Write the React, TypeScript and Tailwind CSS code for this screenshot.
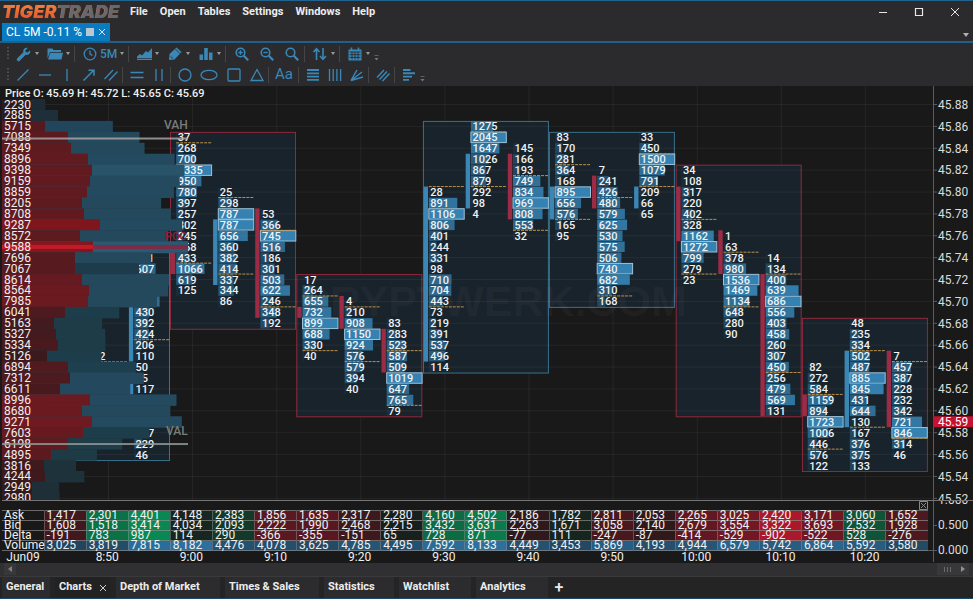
import type { ReactNode } from "react";

type Side = "up" | "down";

interface Cluster {
  slot: number;
  start: number;
  values: number[];
  body: [number, number];
  side: Side;
  dashes: number[];
  max?: number;
}

// Row 0 is price 45.88, every row below is one tick (0.01) lower.
const ROW = 10.94;
const rowY = (row: number) => 18.5 + row * ROW;
const rowTop = (row: number) => rowY(row) - ROW / 2;
const slotX = (slot: number) => 176.2 + slot * 42.1;

const CLUSTERS: Cluster[] = [
  { slot: -1, start: 14, values: [431, 607, 390, 410, 720, 430, 392, 424, 206, 110, 50, 65, 117], body: [19, 23], side: "up", dashes: [21], max: 1000 },
  { slot: -1, start: 30, values: [397, 229, 46], body: [26, 26], side: "up", dashes: [], max: 1000 },
  { slot: 0, start: 3, values: [37, 268, 700, 1335, 950, 780, 397, 257, 302, 245, 468, 433, 1066, 619, 125], body: [14, 15], side: "down", dashes: [3, 14] },
  { slot: 1, start: 8, values: [25, 298, 787, 787, 656, 360, 382, 414, 337, 344, 86], body: [11, 16], side: "up", dashes: [8, 15] },
  { slot: 2, start: 10, values: [53, 366, 745, 516, 186, 301, 503, 622, 246, 348, 192], body: [10, 19], side: "down", dashes: [11, 18] },
  { slot: 3, start: 16, values: [17, 264, 655, 732, 899, 688, 330, 40], body: [19, 19], side: "down", dashes: [17, 22] },
  { slot: 4, start: 18, values: [4, 210, 908, 1150, 924, 576, 579, 394, 40], body: [18, 20], side: "down", dashes: [18, 23] },
  { slot: 5, start: 20, values: [83, 283, 523, 587, 509, 1019, 647, 765, 79], body: [21, 24], side: "down", dashes: [22, 27] },
  { slot: 6, start: 8, values: [28, 891, 1106, 806, 401, 244, 331, 98, 710, 704, 443, 73, 219, 391, 537, 496, 114], body: [8, 23], side: "up", dashes: [7, 18] },
  { slot: 7, start: 2, values: [1275, 2045, 1647, 1026, 867, 879, 292, 98, 4], body: [5, 9], side: "up", dashes: [2, 7] },
  { slot: 8, start: 4, values: [145, 166, 193, 749, 834, 969, 808, 553, 32], body: [5, 10], side: "down", dashes: [6, 11] },
  { slot: 9, start: 3, values: [83, 170, 281, 364, 168, 895, 656, 576, 165, 95], body: [8, 10], side: "up", dashes: [5, 10] },
  { slot: 10, start: 6, values: [7, 241, 426, 480, 579, 625, 530, 575, 506, 740, 682, 310, 168], body: [7, 9], side: "down", dashes: [8, 17] },
  { slot: 11, start: 3, values: [33, 450, 1500, 1079, 791, 209, 66, 65], body: [8, 9], side: "up", dashes: [4, 7] },
  { slot: 12, start: 6, values: [34, 108, 317, 220, 402, 328, 1162, 1272, 799, 279, 23], body: [8, 12], side: "down", dashes: [10, 15] },
  { slot: 13, start: 12, values: [1, 63, 378, 980, 1536, 1469, 1134, 648, 280, 90], body: [12, 15], side: "down", dashes: [13, 18] },
  { slot: 14, start: 14, values: [14, 134, 400, 639, 686, 556, 403, 458, 260, 307, 450, 256, 479, 569, 131], body: [16, 28], side: "down", dashes: [15, 24] },
  { slot: 15, start: 24, values: [82, 272, 584, 1159, 894, 1723, 1006, 446, 576, 122], body: [27, 28], side: "down", dashes: [26, 31] },
  { slot: 16, start: 20, values: [48, 235, 334, 502, 487, 885, 845, 431, 644, 130, 167, 376, 375, 133], body: [23, 29], side: "up", dashes: [22, 29] },
  { slot: 17, start: 23, values: [7, 457, 387, 228, 232, 342, 721, 846, 314, 46], body: [23, 29], side: "down", dashes: [23, 30] },
];

const SESSIONS: { x: number; top: number; bottom: number; side: Side }[] = [
  { x: 44.5, top: 14, bottom: 32, side: "up" },
  { x: 170.5, top: 3, bottom: 20, side: "down" },
  { x: 296.8, top: 16, bottom: 28, side: "down" },
  { x: 423.4, top: 2, bottom: 24, side: "up" },
  { x: 549.4, top: 3, bottom: 18, side: "up" },
  { x: 676.2, top: 6, bottom: 28, side: "down" },
  { x: 802.4, top: 20, bottom: 33, side: "down" },
];

// [total volume, right edge of the sell part, sell colour, buy colour]
const PROFILE: [number, number, string, string][] = [
  [2230, 31, "#2a1b1e", "#1d2b34"],
  [2885, 31, "#33191d", "#1d2f39"],
  [5715, 45, "#551a1f", "#21455a"],
  [7088, 68, "#5b1a1f", "#24485c"],
  [7349, 71, "#5d1a1f", "#24485c"],
  [8896, 88, "#611a20", "#244a60"],
  [9398, 92, "#611a20", "#285369"],
  [9159, 90, "#611a20", "#244a60"],
  [8859, 87, "#611a20", "#244a60"],
  [8205, 82, "#5d1a1f", "#24485c"],
  [8708, 84, "#611a20", "#24485c"],
  [9287, 100, "#7e161d", "#244a60"],
  [8572, 80, "#5d1a1f", "#24485c"],
  [9588, 93, "#85161d", "#2b5873"],
  [7696, 75, "#561a1f", "#24485c"],
  [7067, 75, "#561a1f", "#1e3b4b"],
  [8614, 82, "#641a20", "#24485c"],
  [8564, 89, "#6b1a20", "#24485c"],
  [7985, 88, "#6b1a20", "#24485c"],
  [6041, 65, "#4d1a1f", "#1e3d4a"],
  [5163, 54, "#431a1e", "#1e3b48"],
  [5327, 56, "#431a1e", "#1e3b48"],
  [5334, 58, "#481a1e", "#1e3b48"],
  [5126, 47, "#3b1a1d", "#1e3d4a"],
  [6894, 68, "#501a1f", "#1e3f4e"],
  [7312, 70, "#4d1a1f", "#24495e"],
  [6611, 60, "#481a1e", "#24495e"],
  [8996, 90, "#6b1a20", "#244a60"],
  [8680, 82, "#6b1a20", "#24485c"],
  [9271, 92, "#6e1a20", "#244a60"],
  [7603, 83, "#661a20", "#1e3d4a"],
  [6198, 68, "#5f1a20", "#1e3d48"],
  [4895, 51, "#5a1a1f", "#1e3a45"],
  [3816, 44, "#3f1a1d", "#1e323b"],
  [4244, 45, "#3f1a1d", "#1e323b"],
  [2949, 32, "#331a1d", "#1e2f37"],
  [2980, 32, "#331a1d", "#1e2f37"],
];

const STATS = {
  Ask: [1417, 2301, 4401, 4148, 2383, 1856, 1635, 2317, 2280, 4160, 4502, 2186, 1782, 2811, 2053, 2265, 3025, 2420, 3171, 3060, 1652],
  Bid: [1608, 1518, 3414, 4034, 2093, 2222, 1990, 2468, 2215, 3432, 3631, 2263, 1671, 3058, 2140, 2679, 3554, 3322, 3693, 2532, 1928],
  Delta: [-191, 783, 987, 114, 290, -366, -355, -151, 65, 728, 871, -77, 111, -247, -87, -414, -529, -902, -522, 528, -276],
  Volume: [3025, 3819, 7815, 8182, 4476, 4078, 3625, 4785, 4495, 7592, 8133, 4449, 3453, 5869, 4193, 4944, 6579, 5742, 6864, 5592, 3580],
};

const TIMES = ["8:50", "9:00", "9:10", "9:20", "9:30", "9:40", "9:50", "10:00", "10:10", "10:20"];

const SIDE_COLOR = { up: "#3a87b5", down: "#9c2b45" };

function deltaColor(delta: number) {
  const alpha = Math.min(1, Math.abs(delta) / 1000 + (delta < 0 ? 0.08 : 0));
  return delta < 0 ? `rgba(172, 24, 44, ${alpha})` : `rgba(8, 138, 84, ${alpha})`;
}

function ClusterColumn({ slot, start, values, body, side, dashes, max }: Cluster) {
  const x = slotX(slot);
  const peak = max ?? Math.max(...values);
  return (
    <g>
      <rect x={x - 5.2} y={rowTop(body[0])} width={4.4} height={(body[1] - body[0] + 1) * ROW} fill={SIDE_COLOR[side]} />
      {values.map((v, i) => {
        const ratio = v / peak;
        return (
          <g key={i}>
            <rect
              x={x}
              y={rowTop(start + i) + 0.3}
              width={35.4 * ratio}
              height={ROW - 0.5}
              fill="#3787b8"
              fillOpacity={ratio < 0.15 ? 0.1 : 0.2 + ratio * 0.75}
              stroke={ratio === 1 ? "#9cc3d8" : "none"}
            />
            <text x={x + 1.5} y={rowY(start + i) + 4} className="fill-[#eef2f4] text-[11px] font-medium">
              {v}
            </text>
          </g>
        );
      })}
      {dashes.map((row) => (
        <line key={row} x1={x} x2={x + 36} y1={rowTop(row + 1)} y2={rowTop(row + 1)} stroke="#b8914a" strokeDasharray="3 1" />
      ))}
    </g>
  );
}

function FootprintChart() {
  const priceRows = Array.from({ length: 19 }, (_, i) => i * 2);
  return (
    <svg viewBox="0 0 973 415" className="block h-auto w-full bg-[#191919]" role="img" aria-label="CL 5M footprint chart">
      <defs>
        <clipPath id="plot">
          <rect x="2" y="0" width="971" height="414" />
        </clipPath>
      </defs>
      <g clipPath="url(#plot)">
        {TIMES.map((t, i) => (
          <line key={t} x1={108.5 + i * 84.1} x2={108.5 + i * 84.1} y1="0" y2="414" stroke="#262626" />
        ))}
        {SESSIONS.map((s) => (
          <rect
            key={s.x}
            x={s.x}
            y={rowTop(s.top) + 0.5}
            width={125}
            height={(s.bottom - s.top + 1) * ROW}
            fill="#19232c"
            stroke={s.side === "up" ? "#39718c" : "#8f293c"}
          />
        ))}
        {priceRows.map((row) => (
          <line key={row} x1="2" x2="933" y1={rowY(row)} y2={rowY(row)} stroke="#ffffff" strokeOpacity="0.055" />
        ))}
        <text x="299" y="230" className="fill-white/4 text-[43px] font-bold [font-family:'Liberation_Sans',sans-serif]">
          CRYPTWERK.COM
        </text>
        {CLUSTERS.map((c) => (
          <ClusterColumn key={`${c.slot}-${c.start}`} {...c} />
        ))}
        <text x={slotX(-2) + 1} y={rowY(23) + 4} className="fill-[#eef2f4] text-[11px] font-medium">
          72
        </text>
        <line x1="92" x2="127" y1={rowTop(24)} y2={rowTop(24)} stroke="#b8914a" strokeDasharray="3 1" />

        {PROFILE.map(([total, sell, sellColor, buyColor], i) => (
          <g key={i}>
            <rect x="2" y={rowTop(i)} width={total * 0.0194} height={ROW + 0.5} fill={buyColor} />
            <rect x="2" y={rowTop(i)} width={sell - 2} height={ROW + 0.5} fill={sellColor} />
          </g>
        ))}
        <rect x="2" y={rowY(13) - 1.8} width="186" height="4" fill="#7f2b45" />
        <rect x="2" y={rowY(13) - 1.8} width="91" height="4" fill="#c31b25" />
        <text x="165" y="154" className="fill-[#8c2037] text-[11px] font-medium">POC</text>
        {PROFILE.map(([total], i) => (
          <text key={i} x="4" y={rowY(i) + 4} className="fill-[#f0f0f0] text-[12px]">
            {total}
          </text>
        ))}
        <rect x="2" y={rowY(3) + 0.2} width="186" height="2" fill="#b0aaaa" fillOpacity="0.8" />
        <rect x="2" y={rowY(31) - 0.6} width="186" height="2" fill="#909896" fillOpacity="0.85" />
        <text x="164" y="43" className="fill-[#7b7b7b] text-[12px] font-medium">VAH</text>
        <text x="166" y="349" className="fill-[#76807e] text-[12px] font-medium">VAL</text>

        <line x1="933.5" x2="933.5" y1="0" y2="414" stroke="#5c5c5c" />
        {priceRows.map((row) => (
          <g key={row}>
            <line x1="933" x2="937" y1={rowY(row)} y2={rowY(row)} stroke="#5c5c5c" />
            <text x="938" y={rowY(row) + 4.3} className="fill-[#dcdcdc] text-[12px]">
              {(45.88 - row / 100).toFixed(2)}
            </text>
          </g>
        ))}
        <rect x="933" y={rowTop(29)} width="40" height={ROW} fill="#c41230" />
        <text x="938" y={rowY(29) + 4.3} className="fill-white text-[12px]">45.59</text>
      </g>
      <text x="5" y="11" className="fill-[#f0f0f0] text-[11px] font-medium">
        Price O: 45.69 H: 45.72 L: 45.65 C: 45.69
      </text>
      <line x1="2" x2="973" y1="414.5" y2="414.5" stroke="#757575" />
    </svg>
  );
}

function StatsTable() {
  return (
    <table className="w-full table-fixed border-collapse text-xs leading-[9px] text-[#f0f0f0]">
      <tbody>
        {(Object.keys(STATS) as (keyof typeof STATS)[]).map((name) => (
          <tr key={name} className="border-y border-[#8b8b8b]/70">
            <th scope="row" className="h-[10px] overflow-visible p-0 pl-0.5 text-left font-normal">
              {name}
            </th>
            {STATS[name].map((v, i) => (
              <td
                key={i}
                className="border-l border-[#8b8b8b]/50 p-0 pl-0.5"
                style={{
                  backgroundColor: name === "Volume" ? `rgba(47, 124, 178, ${0.2 + v / 12000})` : deltaColor(STATS.Delta[i]),
                }}
              >
                {name === "Delta" ? v : v.toLocaleString("en-US")}
              </td>
            ))}
          </tr>
        ))}
      </tbody>
      <tfoot>
        <tr>
          <th scope="row" className="p-0 pt-px text-center font-normal leading-[11px]">Jun09</th>
          {STATS.Ask.map((_, i) => (
            <td key={i} className="p-0 pt-px text-center leading-[11px]">
              {i % 2 === 1 ? TIMES[(i - 1) / 2] : ""}
            </td>
          ))}
        </tr>
      </tfoot>
    </table>
  );
}

function Icon({ children, wide }: { children: ReactNode; wide?: boolean }) {
  return (
    <svg
      viewBox={wide ? "0 0 20 16" : "0 0 16 16"}
      className={wide ? "h-4 w-5" : "h-4 w-4"}
      fill="none"
      stroke="currentColor"
      strokeWidth="1.3"
      aria-hidden="true"
    >
      {children}
    </svg>
  );
}

const Separator = () => <span className="h-4 w-1 border-l border-[#454547]" />;

const Grip = () => (
  <svg viewBox="0 0 4 14" className="mr-0.5 h-3.5 w-1" aria-hidden="true">
    <path d="M2 0v14" stroke="#5e5e60" strokeWidth="1.5" strokeDasharray="1.5 2" />
  </svg>
);

const Caret = () => (
  <svg viewBox="0 0 4 3" className="ml-[3px] h-[3px] w-1" aria-hidden="true">
    <path d="M0 0h4L2 3z" fill="#9a9a9a" />
  </svg>
);

const Overflow = () => (
  <svg viewBox="0 0 5 6" className="mt-2 h-1.5 w-[5px]" aria-hidden="true">
    <path d="M.5 .5h4" stroke="#5f5f62" />
    <path d="M.5 3h4L2.5 5.5z" fill="#77777a" />
  </svg>
);

function DropButton({ label, children, text }: { label: string; children: ReactNode; text?: string }) {
  return (
    <button aria-label={label} className={`flex h-5 items-center pl-1 ${text ? "w-[50px]" : "w-[31px]"}`}>
      <Icon>{children}</Icon>
      {text && <span className="ml-0.5 text-xs font-medium">{text}</span>}
      <Caret />
    </button>
  );
}

function ToolButton({ label, className = "w-[22px]", wide, children }: { label: string; className?: string; wide?: boolean; children: ReactNode }) {
  return (
    <button aria-label={label} className={`flex h-5 items-center justify-center ${className}`}>
      <Icon wide={wide}>{children}</Icon>
    </button>
  );
}

function Toolbar() {
  return (
    <div className="flex flex-col px-1.5 pb-px text-[#3a88b8]">
      <div className="flex h-[21px] items-center">
        <Grip />
        <DropButton label="Settings">
          <path d="M2.5 13.5 8 8" strokeWidth="3.4" strokeLinecap="round" />
          <path d="M14 4.2 11.5 6.4 9.6 6 9.5 4.2 11.8 2C9.5 1.3 7 3 7.2 5.8c.2 2.4 2.3 3.5 4.300 3C13.8 8.2 14.7 6.2 14 4.2Z" fill="currentColor" stroke="none" />
        </DropButton>
        <DropButton label="Open chart">
          <path d="M.5 2.500h5l1 1.500h7.500v2H3L.5 12.500z" fill="currentColor" stroke="none" />
          <path d="M3.300 6.700H16L14.500 13.500H1z" fill="currentColor" stroke="none" />
        </DropButton>
        <Separator />
        <DropButton label="Timeframe" text="5M">
          <circle cx="8" cy="8" r="5.8" />
          <path d="M8 4.5V8.2l2.5 1.3" />
        </DropButton>
        <Separator />
        <DropButton label="Chart type">
          <path d="M1 10.500 4 8l2 1.500L10 5l2 1.500L16 2v12H1z" fill="currentColor" stroke="none" />
          <path d="M0 12.500h16" stroke="#2b2b2d" strokeWidth="0.7" />
        </DropButton>
        <DropButton label="Drawing">
          <path d="M2.500 8 9.500 1.500l5 4.500-7 7.500L2 14z" fill="currentColor" stroke="none" />
          <path d="M8.300 3 12.800 7.500M3.500 10.500 6 12.500" stroke="#2b2b2d" strokeWidth="0.8" />
        </DropButton>
        <DropButton label="Indicators">
          <path d="M1.500 8.500h3.500V14H1.500zM6.200 2h3.600v12H6.200zM11 6.500h3.500V14H11z" fill="currentColor" stroke="none" />
        </DropButton>
        <Separator />
        <ToolButton label="Zoom in" className="w-[25px]">
          <circle cx="6.5" cy="6.5" r="4.3" strokeWidth="1.6" />
          <path d="m9.8 9.8 4.4 4.400" strokeWidth="2.2" />
          <path d="M4.3 6.5h4.400M6.5 4.300v4.400" />
        </ToolButton>
        <ToolButton label="Zoom out" className="w-[25px]">
          <circle cx="6.5" cy="6.5" r="4.3" strokeWidth="1.6" />
          <path d="m9.8 9.8 4.4 4.400" strokeWidth="2.2" />
          <path d="M4.3 6.5h4.400" />
        </ToolButton>
        <ToolButton label="Reset zoom" className="w-[25px]">
          <circle cx="6.5" cy="6.5" r="4.3" strokeWidth="1.6" />
          <path d="m9.8 9.8 4.4 4.400" strokeWidth="2.2" />
        </ToolButton>
        <Separator />
        <DropButton label="Scale">
          <path d="M4.500 14V3M1.500 6l3-3.300L7.500 6M11 2v11M8 10l3 3.300L14 10" strokeWidth="1.6" />
        </DropButton>
        <Separator />
        <DropButton label="Calendar">
          <path d="M1.500 3.500h13v11h-13z" fill="currentColor" stroke="none" />
          <path d="M4.500 1.500v3M11.500 1.500v3" strokeWidth="1.6" />
          <path d="M2.500 6h11M2.500 8.700h11M2.500 11.400h11M5 6v7.500M8 6v7.500M11 6v7.500" stroke="#2b2b2d" strokeWidth="0.9" />
        </DropButton>
        <Overflow />
      </div>
      <div className="flex h-[21px] items-center">
        <Grip />
        <ToolButton label="Trend line"><path d="M2.500 13.500l11-11" /></ToolButton>
        <ToolButton label="Horizontal line"><path d="M2 8h12" /></ToolButton>
        <ToolButton label="Vertical line"><path d="M8 2v12" /></ToolButton>
        <ToolButton label="Arrow">
          <path d="M2.500 13.500 12.500 3.500M7.500 3.200h5.500v5.500" strokeWidth="1.5" />
        </ToolButton>
        <ToolButton label="Channel"><path d="M1.500 12 10 3M6 13.500 14.500 4.500" /></ToolButton>
        <Separator />
        <ToolButton label="Horizontal range"><path d="M1.500 5.500h13M1.500 10.500h13" /></ToolButton>
        <ToolButton label="Vertical range"><path d="M5 2v12M11 2v12" /></ToolButton>
        <Separator />
        <ToolButton label="Circle"><circle cx="8" cy="8" r="6" /></ToolButton>
        <ToolButton label="Ellipse" className="w-[26px]" wide><ellipse cx="10" cy="8" rx="8" ry="4.7" /></ToolButton>
        <ToolButton label="Rectangle" className="w-6"><rect x="2" y="2" width="12" height="12" rx="1" /></ToolButton>
        <ToolButton label="Triangle"><path d="M8 2.500 14 13.500H2z" /></ToolButton>
        <Separator />
        <button aria-label="Text" className="flex h-5 w-6 items-center justify-center text-[15px]">Aa</button>
        <span className="w-0.5" />
        <Separator />
        <ToolButton label="Fibonacci retracement"><path d="M2 3h12M2 6.300h12M2 9.600h12M2 12.900h12" strokeWidth="1.8" /></ToolButton>
        <ToolButton label="Fibonacci time zones"><path d="M2.500 2v12M6.200 2v12M9.900 2v12M13.600 2v12" /></ToolButton>
        <ToolButton label="Fibonacci fan"><path d="M2 13.500 8 3M2 13.500 13 5M2 13.500 14 10" strokeWidth="1.5" /></ToolButton>
        <Separator />
        <ToolButton label="Parallel lines"><path d="M2 10.500 9 3M4.500 12.500 12 4.500M7.500 14 14.500 6.500" strokeWidth="1.5" /></ToolButton>
        <Separator />
        <ToolButton label="Volume profile"><path d="M2 3h7.500M2 6.300h12M2 9.600h9M2 12.900h6" strokeWidth="1.9" /></ToolButton>
        <Overflow />
      </div>
    </div>
  );
}

function TitleBar() {
  return (
    <header className="flex h-[22px] items-center pl-0.5">
      <div className="w-[120px] whitespace-nowrap bg-gradient-to-b from-[#f0843f] to-[#e2502c] bg-clip-text text-lg font-black italic leading-none text-transparent [font-family:Inter,sans-serif]">
        TIGER<span className="text-[#68686a]">TRADE</span>
      </div>
      <nav className="ml-2 flex gap-3 text-[11px] font-bold leading-4 text-[#ededed]">
        {["File", "Open", "Tables", "Settings", "Windows", "Help"].map((m) => (
          <button key={m}>{m}</button>
        ))}
      </nav>
      <div className="ml-auto flex items-center gap-6 pr-3 text-[#e8e8e8]">
        <button aria-label="Minimize">
          <svg viewBox="0 0 12 12" className="h-3 w-3"><path d="M2 6.500h8" stroke="currentColor" /></svg>
        </button>
        <button aria-label="Maximize">
          <svg viewBox="0 0 12 12" className="h-3 w-3"><path d="M2.500 2.500h7v7h-7z" fill="none" stroke="currentColor" strokeWidth="1.2" /></svg>
        </button>
        <button aria-label="Close">
          <svg viewBox="0 0 12 12" className="h-3 w-3"><path d="m2 2 8 8M10 2l-8 8" stroke="currentColor" /></svg>
        </button>
      </div>
    </header>
  );
}

function BottomTabs() {
  const tabs: [string, string][] = [
    ["General", "w-12"],
    ["Charts", "w-14"],
    ["Depth of Market", "w-[104px]"],
    ["Times & Sales", "w-[94px]"],
    ["Statistics", "w-[70px]"],
    ["Watchlist", "w-[72px]"],
    ["Analytics", "w-[72px]"],
  ];
  return (
    <nav className="flex h-[21px] gap-[5px] bg-[#242425] pl-0.5 text-[11px] font-bold text-[#ececec]">
      {tabs.map(([name, width]) => (
        <button key={name} className={`flex items-center justify-between whitespace-nowrap px-1 ${width} ${name === "Charts" ? "bg-[#222223]" : "bg-[#2c2c2e]"}`}>
          {name}
          {name === "Charts" && (
            <svg viewBox="0 0 8 8" className="h-2 w-2"><path d="m1 1 6 6M7 1 1 7" stroke="#cfcfcf" /></svg>
          )}
        </button>
      ))}
      <button aria-label="Add workspace" className="flex w-3 items-center justify-center text-base font-medium leading-none">+</button>
    </nav>
  );
}

export default function App() {
  return (
    <div className="min-h-screen border-b-2 border-t border-b-[#1d4a6b] border-t-[#20648f] bg-[#2b2b2d] [font-family:Roboto,'Liberation_Sans',sans-serif]">
      <TitleBar />
      <div className="flex h-5 items-end justify-between border-b-2 border-[#1e5f8c] pl-0.5">
        <div className="flex h-[18px] w-[108px] items-center bg-[#0b7bc1] pl-1 text-xs text-white">
          <span className="whitespace-nowrap">CL 5M -0.11 %</span>
          <span className="ml-1 h-2 w-2 bg-[#b9c7d2]" />
          <button aria-label="Close chart" className="ml-[3px]">
            <svg viewBox="0 0 10 10" className="h-2.5 w-2.5"><path d="m2 2 6 6M8 2 2 8" stroke="#d4e6f2" /></svg>
          </button>
        </div>
        <button aria-label="Tab list" className="mb-1 mr-1">
          <svg viewBox="0 0 6 4" className="h-1 w-1.5"><path d="M0 0h6L3 4z" fill="#b0b0b0" /></svg>
        </button>
      </div>
      <Toolbar />
      <main>
        <FootprintChart />
        <section className="flex bg-[#191919] pl-0.5">
          <div className="min-w-0 flex-1">
            <div className="flex h-[9px] justify-end">
              <button aria-label="Close panel">
                <svg viewBox="0 0 9 9" className="h-[9px] w-[9px]"><path d="M.5.5h8v8h-8zM2 2l5 5M7 2 2 7" fill="none" stroke="#8a8a8a" /></svg>
              </button>
            </div>
            <StatsTable />
          </div>
          <svg viewBox="0 0 45 61" className="h-[61px] w-[45px]">
            <path d="M5.500 0v61M5 24.500h4M0 49.500h9" stroke="#5c5c5c" />
            <text x="10" y="3" className="fill-[#dcdcdc] text-[12px]">1.000</text>
            <text x="10" y="28" className="fill-[#dcdcdc] text-[12px]">0.500</text>
            <text x="10" y="53" className="fill-[#dcdcdc] text-[12px]">0.000</text>
          </svg>
        </section>
        <div className="flex h-[14px] items-start justify-between border-b border-[#3a3a3c] bg-[#303032] px-1">
          <button aria-label="Scroll left" className="h-3 w-3 bg-[#38383a]">
            <svg viewBox="0 0 12 12" className="h-3 w-3"><path d="M8 3v6L4 6z" fill="#808084" /></svg>
          </button>
          <div className="flex">
            <button aria-label="Scroll thumb" className="h-3 w-5 bg-[#38383a]">
              <svg viewBox="0 0 20 12" className="h-3 w-5"><path d="M7.500 4v5M10.500 4v5M13.500 4v5" stroke="#6a6a6e" /></svg>
            </button>
            <button aria-label="Scroll right" className="h-3 w-3 bg-[#38383a]">
              <svg viewBox="0 0 12 12" className="h-3 w-3"><path d="M4 3v6l4-3z" fill="#909094" /></svg>
            </button>
          </div>
        </div>
      </main>
      <BottomTabs />
    </div>
  );
}
